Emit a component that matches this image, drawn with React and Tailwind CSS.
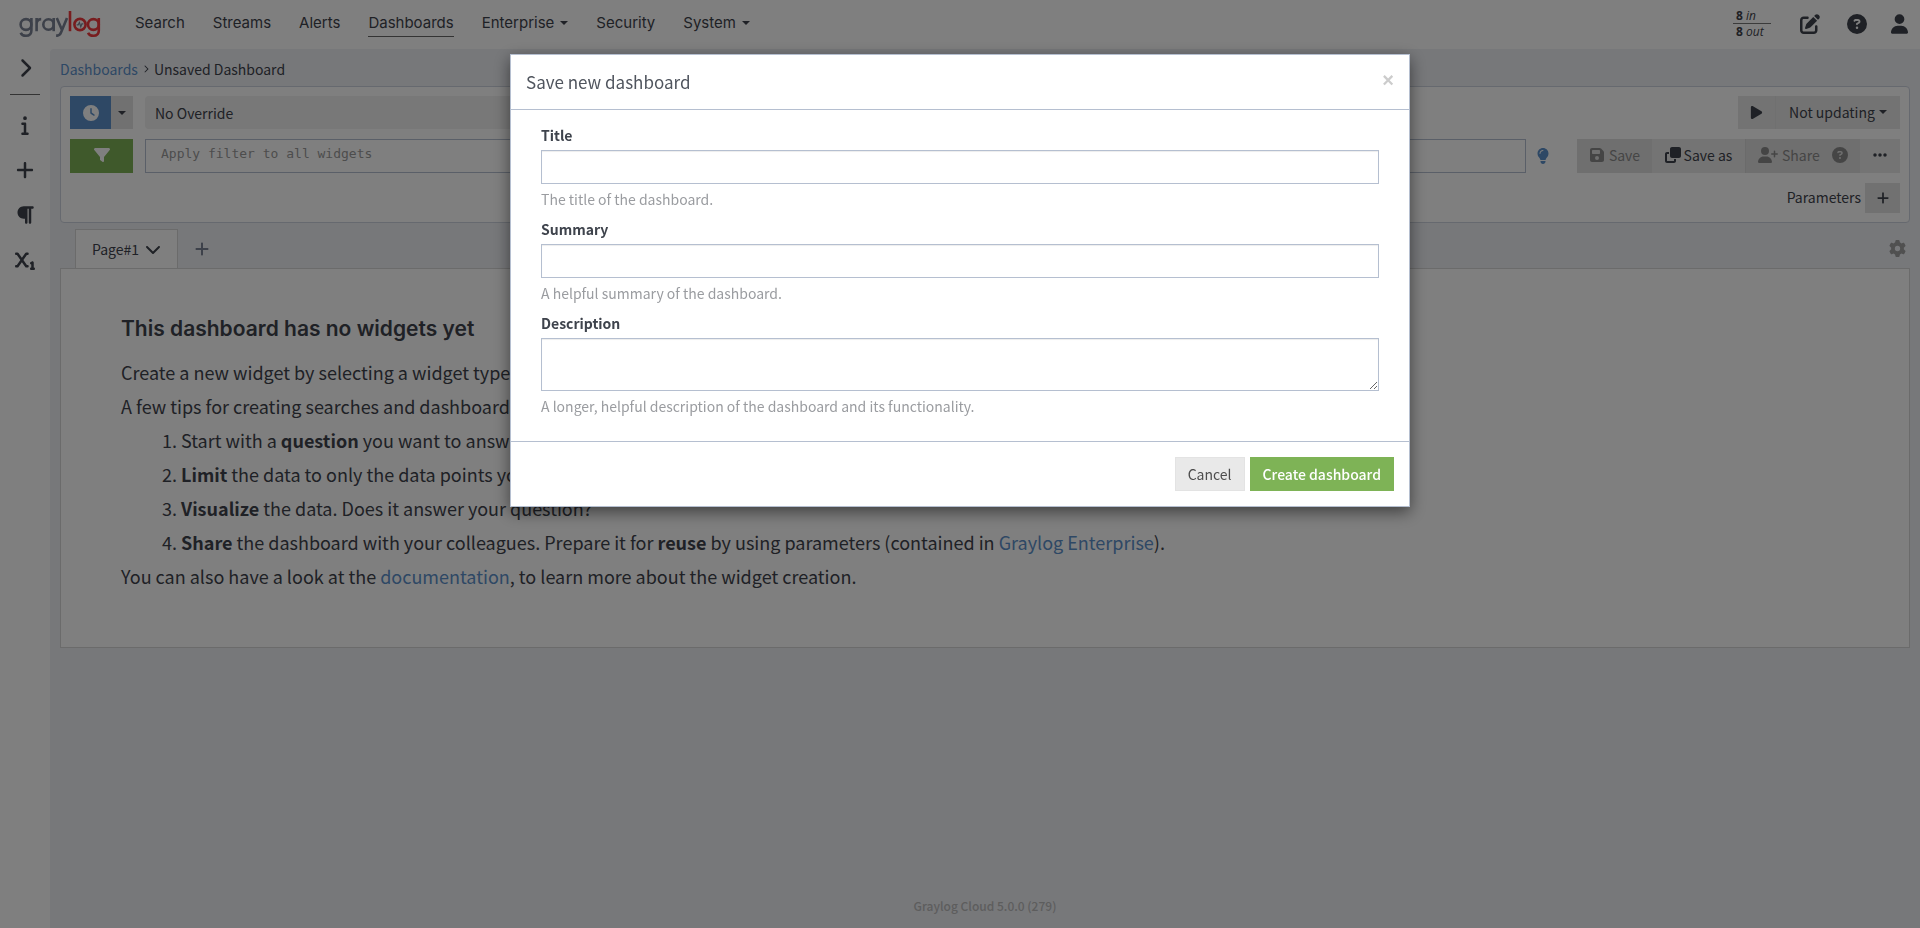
import React from "react";
import { FaChevronRight, FaInfo, FaPlus, FaParagraph, FaSubscript, FaClock, FaFilter, FaChevronDown, FaPlay, FaLightbulb, FaFloppyDisk, FaEllipsis, FaUserPlus, FaCircleQuestion, FaGear, FaUser, FaClone, FaPenToSquare } from "react-icons/fa6";

const nav = [
  { label: "Search" },
  { label: "Streams" },
  { label: "Alerts" },
  { label: "Dashboards", active: true },
  { label: "Enterprise", menu: true },
  { label: "Security" },
  { label: "System", menu: true },
];

function Caret() {
  return (
    <svg width="8" height="4" viewBox="0 0 8 4" className="shrink-0" aria-hidden="true">
      <path d="M0 0h8L4 4z" fill="currentColor" />
    </svg>
  );
}

function Logo() {
  return (
    <a href="#" aria-label="graylog" className="block">
      <svg width="82" height="28" viewBox="0 0 82 28" fill="none" strokeWidth="2.6" aria-hidden="true">
        <g stroke="#7a8294">
          <circle cx="7" cy="13.5" r="5.4" />
          <path d="M12.4 7v12.5c0 3.6-2.4 5.3-5.4 5.3-2.6 0-4.5-1.1-5.3-3.1" />
          <path d="M17.6 20.2V7M17.6 13c0-3.4 1.7-4.9 4.6-4.9" />
          <circle cx="29.5" cy="13.5" r="5.2" />
          <path d="M34.7 7v13.2" />
          <path d="M37.800 7l5.300 12.200M48 7l-6 14.600c-.8 2-1.800 3-3.700 3h-1.200" />
        </g>
        <g stroke="#f03a3e">
          <path d="M51 0v20.2" />
          <circle cx="61" cy="13.5" r="5.6" />
          <circle cx="74.4" cy="13.5" r="5.4" />
          <path d="M79.8 7v12.5c0 3.6-2.4 5.3-5.4 5.3-2.6 0-4.5-1.1-5.3-3.1" />
        </g>
        <path d="M57.6 13.8h1.6l1.2-2.3 1.4 4.2 1.1-2.9h1.5" stroke="#7a8294" strokeWidth="1.2" />
      </svg>
    </a>
  );
}

function TopBar() {
  return (
    <header className="flex h-[49px] shrink-0 items-center justify-between bg-white pl-[19px] pr-3">
      <div className="flex items-center">
        <Logo />
        <nav className="ml-[34px] flex items-start gap-7 pb-[3px] font-['Inter',sans-serif] text-[15px] leading-[26px]">
          {nav.map((n) => (
            <a
              key={n.label}
              href="#"
              className={n.active ? "flex items-center gap-1.5 border-b border-[#666]" : "flex items-center gap-1.5"}
            >
              {n.label}
              {n.menu && <Caret />}
            </a>
          ))}
        </nav>
      </div>
      <div className="flex items-center pb-0.5">
        <a href="#" className="mr-[29px] w-[38px] font-['Open_Sans',sans-serif] text-[12px] leading-[15px]">
          <span className="block border-b border-[#777] pl-[3px]"><b>8</b> <i>in</i></span>
          <span className="block pl-[3px]"><b>8</b> <i>out</i></span>
        </a>
        <button type="button" aria-label="Scratchpad" className="mr-[27px]"><FaPenToSquare size={20} /></button>
        <button type="button" aria-label="Help" className="mr-6"><FaCircleQuestion size={20} /></button>
        <button type="button" aria-label="User"><FaUser size={20} className="w-[17px]" /></button>
      </div>
    </header>
  );
}

function SideBar() {
  return (
    <aside className="flex w-[50px] shrink-0 flex-col items-center bg-white">
      <button type="button" aria-label="Open sidebar" className="flex h-[46px] w-[30px] items-center justify-center border-b border-[#666] pb-[7px]"><FaChevronRight size={20} /></button>
      <div className="flex flex-col pt-[7px]">
        <button type="button" aria-label="Info" className="flex h-[45px] w-[50px] items-center justify-center"><FaInfo size={20} /></button>
        <button type="button" aria-label="Create" className="flex h-[45px] w-[50px] items-center justify-center"><FaPlus size={20} /></button>
        <button type="button" aria-label="Highlighting" className="flex h-[45px] w-[50px] items-center justify-center"><FaParagraph size={20} /></button>
        <button type="button" aria-label="Fields" className="flex h-[45px] w-[50px] items-center justify-center"><FaSubscript size={20} /></button>
      </div>
    </aside>
  );
}

function SearchBar() {
  return (
    <section className="flex flex-col gap-2.5 rounded border border-[#cdd3de] bg-white px-[9px] py-[9px]">
      <div className="flex h-[33px] gap-3">
        <div className="flex w-[63px] text-white">
          <button type="button" aria-label="Time range" className="flex w-[41px] items-center justify-center bg-[#5c90ca]"><FaClock size={16} /></button>
          <button type="button" aria-label="Time range presets" className="flex flex-1 items-center justify-center bg-[#e3e3e3] text-[#3e434c]"><Caret /></button>
        </div>
        <div className="flex w-3/5 items-center rounded bg-[#f0f0f0] px-2.5">No Override</div>
        <div className="ml-auto flex bg-[#e6e6e6]">
          <button type="button" aria-label="Play" className="flex w-[38px] items-center justify-center border-r border-[#e0e0e0]"><FaPlay size={15} /></button>
          <button type="button" className="flex w-[124px] items-center justify-center gap-1 pb-px">Not updating<Caret /></button>
        </div>
      </div>
      <div className="flex h-[34px]">
        <button type="button" aria-label="Apply filter" className="mr-3 flex w-[63px] items-center justify-center bg-[#7eb356] pb-0.5 text-white"><FaFilter size={16} /></button>
        <input aria-label="Filter" placeholder="Apply filter to all widgets" className="min-w-0 flex-1 border border-[#b5bfd0] bg-white px-[15px] pb-1 font-['DejaVu_Sans_Mono',monospace] text-[13px] placeholder:text-[#9a9a9a]" />
        <button type="button" aria-label="Query help" className="flex w-[34px] items-center justify-center text-[#5c90ca]"><FaLightbulb size={16} /></button>
        <div className="ml-[17px] flex bg-[#e9e9e9]">
          <button type="button" disabled className="flex w-[75px] items-center justify-center gap-1 bg-[#dedede] pb-0.5 text-[#8b8b8b]"><FaFloppyDisk size={16} />Save</button>
          <button type="button" className="flex w-[94px] items-center justify-center gap-[3px] border-r border-[#d6d6d6] pb-0.5"><FaClone size={16} />Save as</button>
          <button type="button" disabled className="flex w-[114px] items-center gap-1 bg-[#dedede] px-3 pb-0.5 text-[#8b8b8b]"><FaUserPlus size={20} className="h-4" />Share<FaCircleQuestion size={16} className="ml-2" /></button>
          <button type="button" aria-label="More" className="flex w-[40px] items-center justify-center pb-0.5"><FaEllipsis size={16} /></button>
        </div>
      </div>
      <div className="flex h-[30px] items-center justify-end gap-1">
        <span className="pb-0.5">Parameters</span>
        <button type="button" aria-label="Add parameter" className="flex h-full w-[35px] items-center justify-center bg-[#e3e3e3]"><FaPlus size={14} /></button>
      </div>
    </section>
  );
}

function EmptyDashboard() {
  return (
    <section className="border border-[#d6d6d6] bg-white px-[60px] pt-11 pb-[54px]">
      <h2 className="mb-2.5 font-['Inter',sans-serif] text-[21px] font-semibold leading-8">This dashboard has no widgets yet</h2>
      <div className="text-[18px] leading-[34px]">
        <p>Create a new widget by selecting a widget type in the left sidebar section &quot;Create&quot;.</p>
        <p>A few tips for creating searches and dashboards:</p>
        <ol className="list-decimal pl-[60px]">
          <li>Start with a <b>question</b> you want to answer.</li>
          <li><b>Limit</b> the data to only the data points you want to see.</li>
          <li><b>Visualize</b> the data. Does it answer your question?</li>
          <li><b>Share</b> the dashboard with your colleagues. Prepare it for <b>reuse</b> by using parameters (contained in <a href="#" className="text-[#5c90ca]">Graylog Enterprise</a>).</li>
        </ol>
        <p>You can also have a look at the <a href="#" className="text-[#5c90ca]">documentation</a>, to learn more about the widget creation.</p>
      </div>
    </section>
  );
}

function Modal() {
  return (
    <div className="fixed inset-0 bg-black/50 pt-[54px]">
      <form role="dialog" aria-labelledby="dialog-title" className="mx-auto w-[900px] max-w-full border border-[#b5bfd0] bg-white shadow-[0_5px_15px_rgba(0,0,0,0.5)]">
        <div className="flex h-[55px] items-start justify-between border-b border-[#b5bfd0] px-[15px]">
          <h1 id="dialog-title" className="text-[17px] leading-[54px] text-[#50555e]">Save new dashboard</h1>
          <button type="button" aria-label="Close" className="pt-3 font-['Liberation_Sans',sans-serif] text-[20px] font-bold leading-[26px] text-[#cccccc]">×</button>
        </div>
        <div className="flex flex-col px-[30px] pt-[15px] pb-[25px]">
          <label htmlFor="title" className="mb-[5px] font-bold leading-5">Title</label>
          <input id="title" className="h-[34px] border border-[#b5bfd0] px-3 shadow-[inset_0_1px_1px_rgba(0,0,0,0.075)]" />
          <p className="mt-[5px] mb-2.5 leading-5 text-[#9a9ca0]">The title of the dashboard.</p>
          <label htmlFor="summary" className="mb-[5px] font-bold leading-5">Summary</label>
          <input id="summary" className="h-[34px] border border-[#b5bfd0] px-3 shadow-[inset_0_1px_1px_rgba(0,0,0,0.075)]" />
          <p className="mt-[5px] mb-2.5 leading-5 text-[#9a9ca0]">A helpful summary of the dashboard.</p>
          <label htmlFor="description" className="mb-[5px] font-bold leading-5">Description</label>
          <textarea id="description" className="h-[53px] resize-y border border-[#b5bfd0] px-3 shadow-[inset_0_1px_1px_rgba(0,0,0,0.075)]" />
          <p className="mt-[5px] leading-5 text-[#9a9ca0]">A longer, helpful description of the dashboard and its functionality.</p>
        </div>
        <div className="flex justify-end gap-[5px] border-t border-[#b5bfd0] p-[15px]">
          <button type="button" className="h-[34px] border border-[#e3e3e3] bg-[#e9e9e9] px-3 pb-px text-[#4d4d4d]">Cancel</button>
          <button type="submit" className="h-[34px] border border-[#7eb356] bg-[#7eb356] px-3 pb-px font-medium text-white">Create dashboard</button>
        </div>
      </form>
    </div>
  );
}

export default function App() {
  return (
    <div className="flex min-h-screen flex-col bg-white font-['Noto_Sans_CJK_SC','Noto_Sans',sans-serif] text-[14px] leading-5 text-[#3e434c]">
      <TopBar />
      <div className="flex flex-1">
        <SideBar />
        <main className="flex min-w-0 flex-1 flex-col rounded-tl bg-[#eef0f5] px-2.5">
          <div className="flex items-center gap-1 pt-2.5 pb-[7px]">
            <a href="#" className="text-[#5c90ca]">Dashboards</a>
            <FaChevronRight size={8} />
            <span>Unsaved Dashboard</span>
          </div>
          <SearchBar />
          <div className="flex h-[45px] items-end pl-[15px] pr-1">
            <button type="button" className="-mb-px flex h-[40px] items-center gap-1.5 border border-b-0 border-[#d6d6d6] bg-white px-4 pb-0.5">Page#1<FaChevronDown size={16} /></button>
            <button type="button" aria-label="Add page" className="flex h-[39px] w-[48px] items-center justify-center text-[#7a8294]"><FaPlus size={16} /></button>
            <button type="button" aria-label="Dashboard settings" className="ml-auto flex h-[39px] items-center text-[#a0a0a0]"><FaGear size={17} /></button>
          </div>
          <EmptyDashboard />
          <footer className="mt-auto pb-3 text-center text-[12px] font-medium text-[#bbbbbb]">Graylog Cloud 5.0.0 (279)</footer>
        </main>
      </div>
      <Modal />
    </div>
  );
}
